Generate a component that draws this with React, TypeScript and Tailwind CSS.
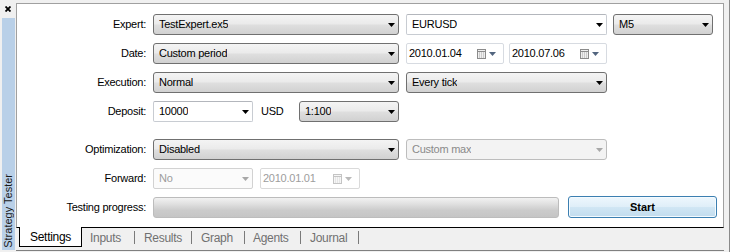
import React from 'react';

type Variant = 'button' | 'edit' | 'disabledButton' | 'disabledEdit';

function Arrow({ color = '#000' }: { color?: string }) {
  return (
    <svg width="7" height="4" viewBox="0 0 7 4" className="shrink-0">
      <path d="M0 0h7L3.5 4z" fill={color} />
    </svg>
  );
}

function CalendarIcon({ disabled }: { disabled?: boolean }) {
  const border = disabled ? '#c4c4c4' : '#8b8b8b';
  const cell = disabled ? '#d6d6d6' : '#a9a9a9';
  return (
    <svg width="9" height="10" viewBox="0 0 9 10" className="shrink-0">
      <rect x="0.5" y="0.5" width="8" height="9" fill={disabled ? '#f6f6f6' : '#efefef'} stroke={border} />
      <line x1="1" y1="2.5" x2="8" y2="2.5" stroke={border} />
      {[4, 6, 8].map((y) =>
        [2, 4, 6].map((x) => <rect key={`${x}-${y}`} x={x} y={y - 0.5} width="1" height="1" fill={cell} />)
      )}
    </svg>
  );
}

function Combo({ value, w, variant = 'button' }: { value: string; w: string; variant?: Variant }) {
  const styles: Record<Variant, string> = {
    button:
      'border-[#707070] rounded-[3px] bg-[linear-gradient(#f4f4f4,#ebebeb_45%,#dedede_55%,#d1d1d1)] text-black',
    edit: 'border-[#c8ccd2] border-t-[#b3b6bc] rounded-[2px] bg-white text-black',
    disabledButton: 'border-[#bdbdbd] rounded-[3px] bg-[#f3f3f3] text-[#8a8a8a]',
    disabledEdit: 'border-[#d2d2d2] rounded-[2px] bg-[#fbfbfb] text-[#9d9d9d]',
  };
  const arrow = variant.startsWith('disabled') ? '#a8a8a8' : '#000';
  return (
    <div className={`${w} h-[21px] shrink-0 flex items-center justify-between pl-[5px] pr-[3px] border ${styles[variant]}`}>
      <span className="truncate">{value}</span>
      <Arrow color={arrow} />
    </div>
  );
}

function DateBox({ value, w, disabled }: { value: string; w: string; disabled?: boolean }) {
  return (
    <div
      className={`${w} h-[21px] shrink-0 flex items-center pl-[2px] pr-[7px] border rounded-[2px] bg-white ${
        disabled ? 'border-[#dadada] text-[#9d9d9d]' : 'border-[#d7dbe1] text-black'
      }`}
    >
      <span className="flex-1">{value}</span>
      <CalendarIcon disabled={disabled} />
      <span className="ml-[3px]">
        <Arrow color={disabled ? '#b9b9b9' : '#52657f'} />
      </span>
    </div>
  );
}

function Row({ label, children, className = '' }: { label: string; children: React.ReactNode; className?: string }) {
  return (
    <div className={`flex items-center h-[21px] ${className}`}>
      <div className="w-[129px] text-right text-black">{label}</div>
      <div className="ml-[7px] flex items-center">{children}</div>
    </div>
  );
}

const otherTabs = [
  { name: 'Inputs', w: 'w-[52px] pl-[8px]' },
  { name: 'Results', w: 'w-[56px] pl-[9px]' },
  { name: 'Graph', w: 'w-[52px] pl-[9px]' },
  { name: 'Agents', w: 'w-[55px] pl-[8px]' },
  { name: 'Journal', w: 'w-[57px] pl-[9px]' },
];

export default function App() {
  return (
    <div className="w-[730px] h-[252px] flex bg-[#f0f0f0] font-['Liberation_Sans',Arial,sans-serif] text-[11px] tracking-[-0.25px] overflow-hidden border-r border-[#8a8a8a]">
      {/* Side caption */}
      <div className="w-[16px] flex flex-col shrink-0">
        <div className="h-[18px] flex items-center justify-center">
          <svg width="6" height="6" viewBox="0 0 6 6">
            <path d="M0.5 0.5l5 5M5.5 0.5l-5 5" stroke="#000" strokeWidth="1.8" />
          </svg>
        </div>
        <div className="ml-[2px] w-[13px] h-[232px] bg-[#b9d0e8] flex flex-col justify-end items-center pb-[2px]">
          <span className="[writing-mode:vertical-rl] rotate-180 text-[11px] tracking-normal text-[#1a1a1a] leading-none">
            Strategy Tester
          </span>
        </div>
      </div>

      <div className="flex-1 flex flex-col pt-[3px] pr-[5px]">
        {/* Settings panel */}
        <div className="h-[225px] bg-white border-t border-l border-r border-[#a0a0a0] border-b border-b-black pt-[10px]">
          <Row label="Expert:">
            <Combo value="TestExpert.ex5" w="w-[246px]" />
            <div className="ml-[7px]">
              <Combo value="EURUSD" w="w-[201px]" variant="edit" />
            </div>
            <div className="ml-[6px]">
              <Combo value="M5" w="w-[100px]" />
            </div>
          </Row>
          <Row label="Date:" className="mt-[8px]">
            <Combo value="Custom period" w="w-[246px]" />
            <div className="ml-[7px]">
              <DateBox value="2010.01.04" w="w-[98px]" />
            </div>
            <div className="ml-[5px]">
              <DateBox value="2010.07.06" w="w-[98px]" />
            </div>
          </Row>
          <Row label="Execution:" className="mt-[8px]">
            <Combo value="Normal" w="w-[246px]" />
            <div className="ml-[7px]">
              <Combo value="Every tick" w="w-[201px]" />
            </div>
          </Row>
          <Row label="Deposit:" className="mt-[8px]">
            <Combo value="10000" w="w-[100px]" variant="edit" />
            <span className="ml-[8px] w-[38px] text-black">USD</span>
            <Combo value="1:100" w="w-[100px]" />
          </Row>
          <Row label="Optimization:" className="mt-[17px]">
            <Combo value="Disabled" w="w-[246px]" />
            <div className="ml-[7px]">
              <Combo value="Custom max" w="w-[201px]" variant="disabledButton" />
            </div>
          </Row>
          <Row label="Forward:" className="mt-[8px]">
            <Combo value="No" w="w-[100px]" variant="disabledEdit" />
            <div className="ml-[7px]">
              <DateBox value="2010.01.01" w="w-[100px]" disabled />
            </div>
          </Row>
          <Row label="Testing progress:" className="mt-[8px]">
            <div className="w-[406px] h-[21px] border border-[#bcbcbc] rounded-[3px] bg-[linear-gradient(#f2f2f2,#dedede_35%,#cbcbcb_65%,#c5c5c5)]" />
            <button className="ml-[9px] w-[149px] h-[22px] -mt-[1px] border border-[#3c7fb1] rounded-[3px] bg-[linear-gradient(#eef7fd,#dfeef8_50%,#d0e6f4_52%,#c2dcee)] shadow-[inset_0_0_0_1px_#f4fbff] font-bold text-black tracking-normal">
              Start
            </button>
          </Row>
        </div>

        {/* Tab strip */}
        <div className="h-[23px] border-b border-[#808080] flex items-start text-[12px] tracking-[-0.3px]">
          <div className="ml-[3px] -mt-px w-[63px] h-[20px] bg-white border-l border-r border-b border-black flex items-center justify-center text-black">
            Settings
          </div>
          {otherTabs.map((t) => (
            <div key={t.name} className="flex items-center h-[19px]">
              <span className={`${t.w} text-[#707070]`}>{t.name}</span>
              <span className="w-px h-[13px] bg-[#7a7a7a]" />
            </div>
          ))}
        </div>
      </div>
    </div>
  );
}
